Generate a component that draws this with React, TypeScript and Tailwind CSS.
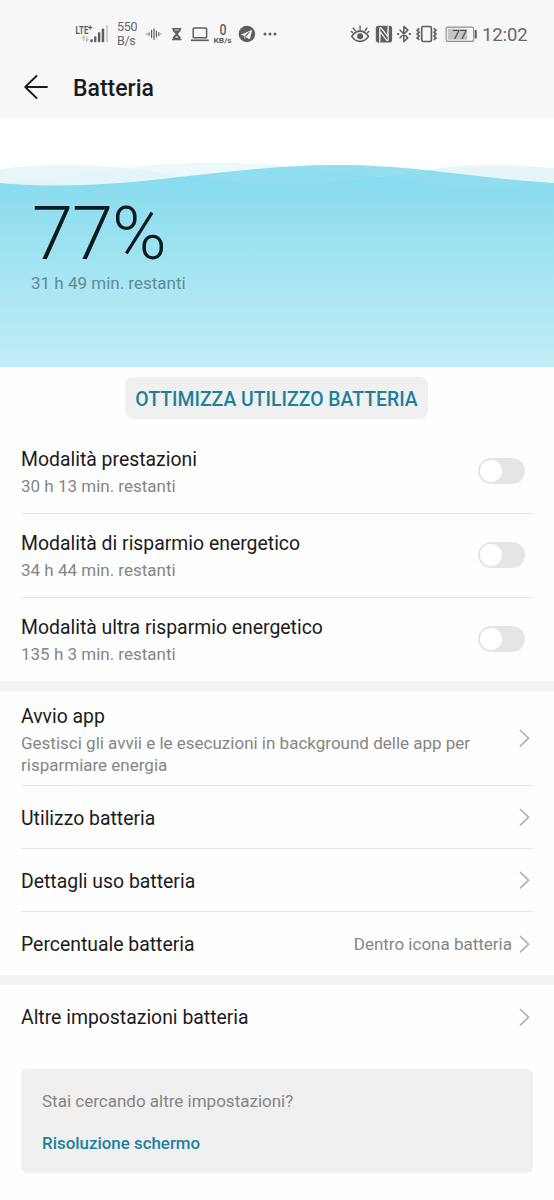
import React from "react";

const INK = "#5f5f5f";

function Signal() {
  return (
    <svg className="h-5 w-[34px] shrink-0" viewBox="75 24 34 20" fill={INK}>
      <text x="75.6" y="33.5" fontFamily="Roboto, sans-serif" fontWeight="700" fontSize="11" textLength="12.8" lengthAdjust="spacingAndGlyphs">LTE</text>
      <path d="M88.3 27.6h4M90.3 25.6v4" stroke={INK} strokeWidth="1.3" />
      <path d="M84 41v-4.6l-2 2M86.6 36.4V41l2-2" stroke="#b9b9b9" strokeWidth="1.2" fill="none" />
      <rect x="90.3" y="39.2" width="2.4" height="3" rx=".8" />
      <rect x="94.1" y="36.2" width="2.3" height="6" rx=".8" />
      <rect x="97.9" y="32.3" width="2.4" height="9.9" rx=".8" />
      <rect x="101.7" y="28.6" width="2.5" height="13.6" rx=".8" />
      <rect x="105.9" y="25" width="2.2" height="17.2" rx=".8" fill="#cfcfcf" />
    </svg>
  );
}

function Waveform() {
  return (
    <svg className="ml-2 h-5 w-[17px] shrink-0" viewBox="145 24 17 20" fill="none" stroke={INK} strokeWidth="1.2" strokeLinecap="round">
      <path d="M146.4 34h.4M149.1 32.8v2.4M151.6 30.4v7.2M154 28.9v10.4M156.4 31v6M158.8 32.6v2.8M161 34h.2" />
    </svg>
  );
}

function Hourglass() {
  return (
    <svg className="ml-[9px] h-5 w-[11px] shrink-0" viewBox="171 24 11 20" fill={INK}>
      <path d="M172 28h9.4v1.3h-.8v1.7l-2.9 3.1 2.9 3.1v1.7h.8v1.3H172v-1.3h.8v-1.7l2.9-3.1-2.9-3.1v-1.7H172z" />
      <path d="M174.5 29.6h4.4v1h-4.4zM176.7 35.8l1.9 2h-3.8z" fill="#d8d8d8" />
    </svg>
  );
}

function Laptop() {
  return (
    <svg className="ml-2 h-5 w-5 shrink-0" viewBox="190 24 20 20" fill="none" stroke={INK}>
      <rect x="193.2" y="28" width="13.4" height="9.8" rx=".8" strokeWidth="1.5" />
      <path d="M191 40.3h17.8" strokeWidth="1.6" />
    </svg>
  );
}

function Telegram() {
  return (
    <svg className="ml-[5px] h-5 w-[18px] shrink-0" viewBox="237.3 24 18 20">
      <circle cx="246.2" cy="34" r="8.3" fill={INK} />
      <path d="M240.6 34.4l10-4.2c.6-.2.8.1.6.7l-2 7.8c-.2.5-.5.5-.9.3l-2.4-1.8-1.3 1.5c-.4.3-.7.1-.7-.3l-.4-2.6-2.9-.8c-.5-.1-.5-.4 0-.6z" fill="#f7f7f7" />
      <path d="M243.8 36l4.8-3.9-3.6 4.5-.4 1.9" fill="none" stroke={INK} strokeWidth=".8" />
    </svg>
  );
}

function Dots() {
  return (
    <svg className="ml-[7px] h-5 w-[15px] shrink-0" viewBox="262 24 15 20" fill={INK}>
      <circle cx="264" cy="34" r="1.5" />
      <circle cx="269" cy="34" r="1.5" />
      <circle cx="274" cy="34" r="1.5" />
    </svg>
  );
}

function Eye() {
  return (
    <svg className="h-5 w-5 shrink-0" viewBox="349.5 24 20 20" fill="none" stroke={INK} strokeWidth="1.6" strokeLinecap="round">
      <path d="M351.2 36.4c4.4-7 12.4-7 16.8 0-4.4 6.6-12.4 6.6-16.8 0z" />
      <circle cx="359.6" cy="36.2" r="3" fill={INK} stroke="none" />
      <path d="M359.6 26.2v3.4M352.7 28l2 2.8M366.5 28l-2 2.8M350.9 31.4l1.2 1.2M368.3 31.4l-1.2 1.2" strokeWidth="1.4" />
    </svg>
  );
}

function Nfc() {
  return (
    <svg className="ml-[5px] h-5 w-[18px] shrink-0" viewBox="374.6 24 18 20">
      <rect x="375.4" y="25.7" width="16.3" height="16.8" rx="2.8" fill={INK} />
      <path d="M379.4 42.5V28.6c0-1 .8-1.3 1.500-.5l6.600 8.500V29.500M387.700 25.700v13.900c0 1-.8 1.300-1.500.5l-6.600-8.500v7.100" fill="none" stroke="#f7f7f7" strokeWidth="1.25" />
    </svg>
  );
}

function Bluetooth() {
  return (
    <svg className="ml-[3px] h-5 w-4 shrink-0" viewBox="396 24 16 20" fill="none" stroke={INK} strokeWidth="1.5">
      <path d="M399.6 29.7l8.2 8.2-4 3.7V26.4l4 3.7-8.2 8.2" strokeLinejoin="round" />
      <path d="M397.2 34h2M408.9 34h2" strokeWidth="1.8" />
    </svg>
  );
}

function Vibrate() {
  return (
    <svg className="ml-[3px] h-5 w-[23px] shrink-0" viewBox="415 24 23 20" fill="none" stroke={INK}>
      <rect x="421.7" y="26.5" width="9.7" height="15" rx="1.6" strokeWidth="1.7" />
      <path d="M419.3 28.4l-2.2 1.9 2 1.9-2 1.9 2 1.9-2 1.9 2.2 1.9M433.8 28.4l2.2 1.9-2 1.9 2 1.9-2 1.9 2 1.9-2.2 1.9" strokeWidth="1.7" />
    </svg>
  );
}

function BatteryLevel() {
  return (
    <svg className="ml-[7px] h-5 w-[33px] shrink-0" viewBox="445 24 33 20">
      <rect x="446.1" y="27.1" width="27.6" height="14.3" rx="2" fill="none" stroke="#8b8b8b" strokeWidth="1.1" />
      <rect x="447.8" y="28.8" width="19.4" height="10.9" fill="#c4c4c4" />
      <rect x="474.7" y="30" width="2.1" height="8.4" rx=".6" fill={INK} />
      <text x="452.2" y="39" fontFamily="Roboto, sans-serif" fontSize="13.5" textLength="14.8" fill="#484848">77</text>
    </svg>
  );
}

function StatusBar() {
  return (
    <div className="flex h-[68px] items-center text-[#666]">
      <div className="flex flex-1 items-center pl-[75px]">
        <Signal />
        <div className="ml-2 w-5 whitespace-nowrap text-[12.5px] leading-[14px] tracking-[-0.3px]">
          <div>550</div>
          <div>B/s</div>
        </div>
        <Waveform />
        <Hourglass />
        <Laptop />
        <svg className="ml-[3px] h-6 w-5 shrink-0 overflow-visible" viewBox="213 22 20 24" fill={INK} fontFamily="Roboto, sans-serif" fontWeight="700">
          <text x="219.4" y="35.2" fontSize="14" fontWeight="500" textLength="7" lengthAdjust="spacingAndGlyphs">0</text>
          <text x="213.5" y="43.2" fontSize="8" textLength="18.2" lengthAdjust="spacingAndGlyphs">KB/s</text>
        </svg>
        <Telegram />
        <Dots />
      </div>
      <div className="flex items-center pr-[27px]">
        <Eye />
        <Nfc />
        <Bluetooth />
        <Vibrate />
        <BatteryLevel />
        <span className="ml-1 w-[45px] whitespace-nowrap pt-px text-[18.5px] leading-5 tracking-[-0.1px]">12:02</span>
      </div>
    </div>
  );
}

function Hero() {
  return (
    <section className="relative h-[249px] bg-white">
      <svg className="absolute inset-0 h-full w-full" viewBox="0 118 554 249" preserveAspectRatio="none">
        <defs>
          <linearGradient id="water" gradientUnits="userSpaceOnUse" x1="0" y1="165" x2="0" y2="367">
            <stop offset="0" stopColor="#86dbf0" />
            <stop offset=".1" stopColor="#8adcef" />
            <stop offset="1" stopColor="#c2eef6" />
          </linearGradient>
        </defs>
        <path d="M0 169C40 164 80 164 120 167.5C170 172 200 181 260 184.5V190H0z" fill="#e3f4f7" fillOpacity=".8" />
        <path d="M20 181.5C80 177 130 162.5 210 162.5C260 162.5 290 166 340 172V190H0z" fill="#dff5f7" fillOpacity=".6" />
        <path d="M400 175C440 168 455 165.3 480 165.3C510 165 535 166 554 168V190H400z" fill="#e6f6f8" />
        <path d="M0 183C20 185 40 185.5 60 185.5C150 185.5 240 165 335 165C420 165 460 177 554 183V367H0z" fill="url(#water)" />
        <path d="M190 176C225 172.5 290 165 335 165C370 165 400 167 430 170.5C380 177 320 187 260 184.5C235 183 215 180 190 176z" fill="#fff" fillOpacity=".06" />
        <path d="M280 167C370 170 420 188 480 188C510 188 530 186 554 183C470 177 430 165 335 165z" fill="#fff" fillOpacity=".05" />
      </svg>
      <div className="relative pl-[31px] pt-[79px]">
        <div className="pl-px text-[74px] font-light leading-[74px] tracking-[-1px] text-[#061a20]">77%</div>
        <div className="mt-0.5 text-[17px] leading-5 text-[#5e8c97]">31 h 49 min. restanti</div>
      </div>
    </section>
  );
}

function ModeRow({ title, detail, last = false }: { title: string; detail: string; last?: boolean }) {
  return (
    <div className={`mx-[21px] flex h-[84px] items-center justify-between ${last ? "pb-px" : "border-b border-[#e6e6e6]"}`}>
      <div className="pt-0.5">
        <div className="text-[19.4px] leading-6 text-[#1b1b1b]">{title}</div>
        <div className="mt-[3px] text-[17px] leading-[22px] text-[#858585]">{detail}</div>
      </div>
      <button role="switch" aria-checked="false" aria-label={title} className="mb-px mr-2 flex h-[26px] w-[47.5px] items-center rounded-full bg-[#e5e5e5] pl-[2px]">
        <span className="size-[22.5px] rounded-full bg-white" />
      </button>
    </div>
  );
}

function Chevron() {
  return (
    <svg className="mr-[3px] h-[18px] w-[11px] shrink-0" viewBox="0 0 11 18" fill="none" stroke="#b0b0b0" strokeWidth="1.7" strokeLinecap="round" strokeLinejoin="round">
      <path d="M1.5 1.5L9.5 9.2L1.5 16.9" />
    </svg>
  );
}

function LinkRow({ title, value, last = false }: { title: string; value?: string; last?: boolean }) {
  return (
    <div className={`mx-[21px] flex h-[63px] items-center ${last ? "" : "border-b border-[#e6e6e6]"}`}>
      <div className={`flex-1 text-[19.4px] leading-6 text-[#1b1b1b] ${last ? "pt-0.5" : "pt-[3px]"}`}>{title}</div>
      {value && <div className="mr-[7px] pt-px text-[17px] leading-5 text-[#858585]">{value}</div>}
      <Chevron />
    </div>
  );
}

export default function App() {
  return (
    <main className="h-[1200px] w-[554px] overflow-hidden bg-[#fefefe] font-['Roboto',sans-serif]">
      <header className="h-[118px] bg-[#f7f7f7]">
        <StatusBar />
        <div className="flex h-10 items-center pl-6">
          <svg className="mb-0.5 size-6" viewBox="0 0 24 24" fill="none" stroke="#1b1b1b" strokeWidth="1.8" strokeLinecap="round" strokeLinejoin="round">
            <path d="M12.5 1L1.2 12L12.5 23M1.2 12H23" />
          </svg>
          <h1 className="ml-[25px] pt-px text-[23px] font-medium leading-7 text-[#1b1b1b]">Batteria</h1>
        </div>
      </header>
      <Hero />
      <div className="flex h-[63px] pl-[125px] pt-[10px]">
        <button className="h-[42px] w-[303px] whitespace-nowrap rounded-lg bg-[#f0f0f0] pt-[3px] text-[19.4px] font-medium text-[#1d819c]">OTTIMIZZA UTILIZZO BATTERIA</button>
      </div>
      <ModeRow title="Modalità prestazioni" detail="30 h 13 min. restanti" />
      <ModeRow title="Modalità di risparmio energetico" detail="34 h 44 min. restanti" />
      <ModeRow title="Modalità ultra risparmio energetico" detail="135 h 3 min. restanti" last />
      <div className="-mt-px h-[10px] bg-[#f2f2f2]" />
      <div className="mx-[21px] flex h-[95px] items-center border-b border-[#e6e6e6]">
        <div className="flex-1 pt-[5px]">
          <div className="text-[19.4px] leading-6 text-[#1b1b1b]">Avvio app</div>
          <div className="mt-[3px] w-[470px] text-[17px] leading-[22px] text-[#858585]">
            Gestisci gli avvii e le esecuzioni in background delle app per
            <br />
            risparmiare energia
          </div>
        </div>
        <Chevron />
      </div>
      <LinkRow title="Utilizzo batteria" />
      <LinkRow title="Dettagli uso batteria" />
      <LinkRow title="Percentuale batteria" value="Dentro icona batteria" last />
      <div className="h-[10px] bg-[#f2f2f2]" />
      <LinkRow title="Altre impostazioni batteria" last />
      <div className="mx-[21px] mt-[21px] h-[104px] rounded-md bg-[#f0f0f0] px-[21px] pt-5">
        <div className="text-[17px] leading-6 text-[#858585]">Stai cercando altre impostazioni?</div>
        <div className="mt-[18px] text-[16.9px] font-medium leading-6 text-[#1d819c]">Risoluzione schermo</div>
      </div>
    </main>
  );
}
